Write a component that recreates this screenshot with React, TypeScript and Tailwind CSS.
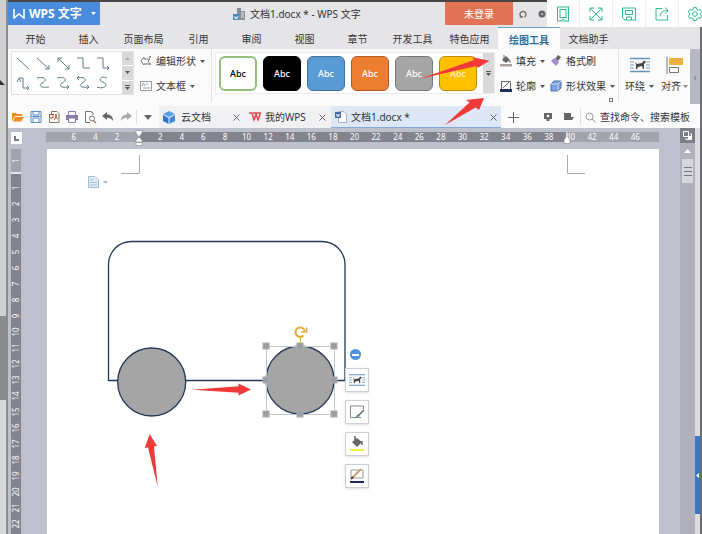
import { ReactNode, useState } from "react";

const menuTabs = [
  "开始", "插入", "页面布局", "引用", "审阅", "视图", "章节", "开发工具", "特色应用", "绘图工具", "文档助手",
];

const connectors = [
  "M4 5 L16 16",
  "M4 5 L16 16 M16 12 V16 H12",
  "M5 5 L16 16 M16 12 V16 H12 M5 9 V5 H9",
  "M4 5 H10 V15 H17",
  "M4 5 H10 V15 H16 M14 13 L16 15 L14 17",
  "M6 4 H10 V14 H16 M14 12 L16 14 L14 16 M4 8 L6 4 L8 8",
  "M4 4 C14 2 14 7 9 9 C5 12 8 14 16 13",
  "M4 4 C14 2 14 7 9 9 C5 12 8 14 16 13 M14 11 L16 13 L14 15",
  "M4 4 C14 2 14 7 9 9 C5 12 8 14 16 13 M14 11 L16 13 L14 15 M6 2 L4 4 L6 6",
  "M14 4 C7 1 5 7 10 8 C16 10 12 16 4 13",
];

const shapeStyles = [
  { name: "白色", className: "bg-white border-2 border-[#93c07c] text-black" },
  { name: "黑色", className: "bg-black border border-black text-white" },
  { name: "蓝色", className: "bg-[#5b9bd5] border border-[#41719c] text-white" },
  { name: "橙色", className: "bg-[#ed7d31] border border-[#ae5a21] text-white" },
  { name: "灰色", className: "bg-[#a5a5a5] border border-[#787878] text-white" },
  { name: "金色", className: "bg-[#ffc000] border border-[#bc8c00] text-[#fff0c0]" },
];

const horizontalMarks = [6, 4, 2, 0, ...Array.from({ length: 23 }, (_, i) => (i + 1) * 2)];
const verticalMarks = Array.from({ length: 22 }, (_, i) => i + 1);

const handles = [
  [266, 346], [300, 346], [334, 346],
  [266, 380], [334, 380],
  [266, 414], [300, 414], [334, 414],
];

function Caret({ className = "text-[#555]" }: { className?: string }) {
  return (
    <svg className={`w-[5px] h-[3px] shrink-0 ${className}`} viewBox="0 0 5 3" fill="currentColor" aria-hidden="true">
      <path d="M0 0 H5 L2.5 3 Z" />
    </svg>
  );
}

function CloseButton({ label }: { label: string }) {
  return (
    <button aria-label={label}>
      <svg className="w-[7px] h-[7px]" viewBox="0 0 7 7" stroke="#666">
        <path d="M.5 .5 L6.5 6.5 M6.5 .5 L.5 6.5" />
      </svg>
    </button>
  );
}

function RibbonButton({ icon, label, caret = true }: { icon: ReactNode, label: string, caret?: boolean }) {
  return (
    <button className="flex items-center h-5 whitespace-nowrap">
      <span className="w-4 shrink-0">{icon}</span>
      <span className="mr-1">{label}</span>
      {caret && <Caret />}
    </button>
  );
}

function WrapIcon({ className }: { className: string }) {
  return (
    <svg className={className} viewBox="0 0 20 16" fill="none" aria-hidden="true">
      <path d="M0 1.5 H20 M0 14.5 H20" stroke="#5f93bb" strokeWidth="1.4" />
      <path d="M0 5 H4 M0 8 H4 M0 11 H4 M16 5 H20 M16 8 H20 M16 11 H20" stroke="#6f9cc0" />
      <path d="M5 5 L7 7 L12 6 L14 3.5 L16 5 L14 7 L14 12 H13 L12 9 L8 10 L7 12 H6 L6 8 Z" fill="#444" />
    </svg>
  );
}

function QuickIcons() {
  const items = [
    { label: "打开", art: <path d="M1 3 H5 L6 4 H11 V6 H4 L1 11 Z M4 7 H13 L10 11.5 H2 Z" fill="#ee8b22" /> },
    { label: "保存", art: <path d="M2 1.5 H12 V12.5 H2 Z M4 1.5 V5 H10 V1.5 M4 12 V8 H10 V12 M2 6.5 H12" stroke="#5b8fcb" fill="none" /> },
    { label: "输出为PDF", art: <><path d="M4.5 4 V1.5 H10 L12 3.5 V12.5 H2.5 V9" stroke="#8a7763" fill="none" /><path d="M2 4.5 H7 M2.5 4.5 V8 H6 V5 M7 10 C9 8 9.5 6 9 4 C8 6 10 9 11 9" stroke="#b54a32" fill="none" /></> },
    { label: "打印", art: <><path d="M1 5 H13 V10 H1 Z" fill="#8d79ac" /><path d="M3.5 5 V1.5 H10.5 V5 M3.5 8 H10.5 V12.5 H3.5 Z" stroke="#8d79ac" fill="#fff" /></> },
    { label: "打印预览", art: <><path d="M10 5 V3 L8 1.5 H2.5 V12.5 H7" stroke="#777" fill="none" /><circle cx="9" cy="8.5" r="2.5" stroke="#777" fill="none" /><path d="M10.5 10.5 L13 13" stroke="#b07d4c" strokeWidth="1.5" /></> },
    { label: "撤销", art: <path d="M1 6 L6 2 V4.5 C10 4.5 12 7 12 11 C10.5 8.5 9 7.8 6 7.8 V10 Z" fill="#666" /> },
    { label: "恢复", art: <path d="M13 6 L8 2 V4.5 C4 4.5 2 7 2 11 C3.5 8.5 5 7.8 8 7.8 V10 Z" fill="#aaa" /> },
  ];
  return (
    <div className="flex items-center gap-1 px-[3px] border-r border-[#ddd] my-1">
      {items.map((item) => (
        <button key={item.label} aria-label={item.label}>
          <svg className="w-[14px] h-[14px]" viewBox="0 0 14 14">{item.art}</svg>
        </button>
      ))}
    </div>
  );
}

function TitleBar() {
  return (
    <header className="flex h-[27px] pb-[2px] border-t-2 border-[#4a4542] bg-[#e5e5e7]">
      <button className="flex items-center w-[92px] shrink-0 bg-[#4a8cdc] text-white text-[12px] font-bold pl-[5px] pr-1">
        <svg className="w-3 h-[10px] mr-1 shrink-0" viewBox="0 0 12 10" fill="none" stroke="#fff" strokeWidth="1.6" aria-hidden="true">
          <path d="M1 0 V9 L6 5 L11 9 V0" />
        </svg>
        <span className="flex-1 text-left whitespace-nowrap">WPS 文字</span>
        <Caret className="text-white" />
      </button>
      <h1 className="flex flex-1 items-center pl-[133px] whitespace-nowrap">
        <svg className="w-3 h-3 mr-[5px]" viewBox="0 0 12 12" aria-hidden="true">
          <path d="M4 0 H8 V3 H12 V12 H6 V6 H4 Z" fill="#8a9098" />
          <path d="M0 6 H6 V12 H0 Z" fill="#4a86c6" />
          <path d="M1.5 8 L2.5 11 L3 9 L4 11 L5 8 M8 5 H11 M8 7 H11 M8 9 H11" stroke="#fff" strokeWidth=".8" fill="none" />
        </svg>
        文档1.docx * - WPS 文字
      </h1>
      <button className="w-[68px] shrink-0 bg-[#e27354] text-white">未登录</button>
      <div className="flex items-center gap-[11px] pl-[6px] w-[187px] shrink-0">
        <button aria-label="皮肤">
          <svg className="w-2 h-2" viewBox="0 0 8 8" fill="none" stroke="#777" strokeWidth="1.5">
            <path d="M2.5 7 A3 3 0 1 1 5.5 7 M1.5 5 V7 H4" />
          </svg>
        </button>
        <button aria-label="设置">
          <svg className="w-2 h-2" viewBox="0 0 8 8" fill="#666">
            <circle cx="4" cy="4" r="3.5" />
            <circle cx="4" cy="4" r="1" fill="#ccc" />
          </svg>
        </button>
      </div>
    </header>
  );
}

function ViewerToolbar() {
  const items = [
    { label: "手机", art: <><rect x="2.5" y="1" width="11" height="14" /><rect x="5" y="3.5" width="6" height="8" /><path d="M7 13.3 H9" /></> },
    { label: "全屏", art: <path d="M2 6 V2 H6 M10 2 H14 V6 M14 10 V14 H10 M6 14 H2 V10 M2 2 L14 14 M14 2 L2 14" /> },
    { label: "保存", art: <path d="M1.5 2 H14.5 V14 H4 L1.5 11.5 Z M4.5 4.5 H11.5 V8.5 H4.5 Z M5.5 14 V11 H10.5 V14" /> },
    { label: "分享", art: <path d="M8 2.5 H2 V14 H13.5 V9 M6 10.5 C6 6.5 9 4.5 14 4.5 M11 1.5 L14.3 4.5 L11 7.5" /> },
    { label: "设置", art: <><circle cx="8" cy="8" r="2.3" /><path d="M6.7 1.5 H9.3 L9.8 3.4 L11.4 4.2 L13.2 3.5 L14.7 5.8 L13.4 7.2 V8.8 L14.7 10.2 L13.2 12.5 L11.4 11.8 L9.8 12.6 L9.3 14.5 H6.7 L6.2 12.6 L4.6 11.8 L2.8 12.5 L1.3 10.2 L2.6 8.8 V7.2 L1.3 5.8 L2.8 3.5 L4.6 4.2 L6.2 3.4 Z" /></> },
  ];
  return (
    <div className="absolute top-0 right-0 flex w-[155px] h-[27px] overflow-hidden bg-white">
      {items.map((item) => (
        <button key={item.label} aria-label={item.label} className="flex items-center justify-center w-[33px] shrink-0 border-r border-[#eee]">
          <svg className="w-4 h-4" viewBox="0 0 16 16" fill="none" stroke="#2dbe87">{item.art}</svg>
        </button>
      ))}
    </div>
  );
}

function Ribbon() {
  return (
    <section aria-label="绘图工具" className="flex h-[57px] bg-[#fbfbfc]">
      <div className="flex h-[44px] mt-[2px] ml-[3px] border border-[#e2e2e4] bg-white">
        <div className="grid grid-cols-5 pl-[1px]">
          {connectors.map((d, i) => (
            <button key={d} aria-label={`连接符 ${i + 1}`}>
              <svg className="w-5 h-5" viewBox="0 0 20 20" fill="none" stroke="#5d7d86">
                <path d={d} />
              </svg>
            </button>
          ))}
        </div>
        <div className="flex flex-col w-[11px] ml-[9px] bg-[#d9d9dc]">
          <button aria-label="上一行" className="flex flex-1 items-center justify-center border-b border-white"><Caret className="text-[#aaa] rotate-180" /></button>
          <button aria-label="下一行" className="flex flex-1 items-center justify-center border-b border-white"><Caret /></button>
          <button aria-label="更多形状" className="flex flex-col flex-1 items-center justify-center gap-[1px]"><span className="w-[5px] h-[1px] bg-[#555]" /><Caret /></button>
        </div>
      </div>

      <div className="flex flex-col gap-[5px] pt-[2px] pl-[6px] pr-[6px] border-r border-[#e2e2e4] mb-1">
        <RibbonButton label="编辑形状" icon={
          <svg className="w-3 h-3" viewBox="0 0 12 12" fill="none" stroke="#777">
            <path d="M1 6 L4 2 V4 H10 L8 6 L10 9 H4 V10 Z" />
            <path d="M9 1 h2 v2 h-2 z M9 8 h2 v2 h-2 z" fill="#999" stroke="none" />
          </svg>
        } />
        <RibbonButton label="文本框" icon={
          <svg className="w-3 h-3" viewBox="0 0 12 12" fill="none" stroke="#999">
            <path d="M.5 1.5 H11.5 V10.5 H.5 Z M2 6 L3.5 3 L5 6 M6 4 H8 M3 8 H10" />
          </svg>
        } />
      </div>

      <div className="flex h-[42px] mt-[3px] ml-[3px] pt-[3px] border border-[#ececee] bg-white">
        <div className="flex gap-[6px] px-[3px]">
          {shapeStyles.map((style) => (
            <button key={style.name} aria-label={style.name} className={`w-[38px] h-[35px] rounded-[6px] text-[9px] font-medium ${style.className}`}>
              Abc
            </button>
          ))}
        </div>
        <button aria-label="更多样式" className="flex flex-col items-center justify-center gap-[1px] w-[11px] -mt-[3px] ml-[3px] bg-[#d9d9dc]">
          <span className="w-[5px] h-[1px] bg-[#555]" />
          <Caret />
        </button>
      </div>

      <div className="grid grid-cols-[auto_auto] gap-x-[5px] gap-y-[5px] content-start pt-[2px] pl-[5px]">
        <RibbonButton label="填充" icon={
          <svg className="w-3 h-3" viewBox="0 0 12 12">
            <path d="M2 5 L6 1 L10 5 L6 8 Z" fill="#666" />
            <path d="M4 0 V4 M10 5 V8" stroke="#666" />
            <path d="M0 9 H12 V11.5 H0 Z" fill="#a9a19e" />
          </svg>
        } />
        <RibbonButton label="格式刷" caret={false} icon={
          <svg className="w-3 h-3" viewBox="0 0 12 12">
            <path d="M8 0 L11 2 L8 6 L5 4 Z" fill="#666" />
            <path d="M4 3 L9 7 L6 11 L1 6 Z" fill="#ab8bd0" />
          </svg>
        } />
        <RibbonButton label="轮廓" icon={
          <svg className="w-3 h-3" viewBox="0 0 12 12" fill="none">
            <path d="M1.5 9 V1.5 H10.5 V9 M3 8 L9 2" stroke="#666" />
            <path d="M0 9 H12 V12 H0 Z" fill="#1d2d5c" />
          </svg>
        } />
        <RibbonButton label="形状效果" icon={
          <svg className="w-3 h-3" viewBox="0 0 12 12">
            <path d="M1 4 L4 1 H11 V8 L8 11 H1 Z" fill="#7d9fe0" stroke="#55709f" />
            <path d="M1 4 H8 V11 M8 4 L11 1" fill="none" stroke="#c5d5f5" />
          </svg>
        } />
      </div>
      <button aria-label="形状设置" className="self-end mb-1 -ml-[6px] w-1 h-1 border border-[#777]" />

      <div className="flex flex-1 gap-[7px] ml-[5px] pl-[6px] mb-1 border-l border-[#e2e2e4]">
        <button className="flex flex-col items-center gap-[6px] pt-[8px] whitespace-nowrap">
          <WrapIcon className="w-5 h-4 shrink-0" />
          <span className="flex items-center gap-1">环绕<Caret /></span>
        </button>
        <button className="flex flex-col items-center gap-[5px] pt-[8px] whitespace-nowrap">
          <svg className="w-5 h-[17px] shrink-0" viewBox="0 0 20 17" aria-hidden="true">
            <path d="M2 0 V17" stroke="#777" />
            <path d="M4 1 H18 V8 H4 Z" fill="#f0b040" />
            <path d="M4.5 10.5 H13.5 V15.5 H4.5 Z" fill="#fff" stroke="#777" />
          </svg>
          <span className="flex items-center gap-[2px]">对齐<Caret className="text-[#888]" /></span>
        </button>
      </div>
      <button aria-label="展开功能区" className="w-[10px] shrink-0 mb-[2px] bg-[#b7b8c3] text-[#777]">›</button>
    </section>
  );
}

function DocumentTabs() {
  return (
    <div className="flex h-[22px] bg-[#fbfbfc] whitespace-nowrap">
      <QuickIcons />
      <button aria-label="自定义快速访问" className="flex items-center justify-center w-[22px]">
        <svg className="w-2 h-[5px]" viewBox="0 0 8 5" fill="#666"><path d="M0 0 H8 L4 5 Z" /></svg>
      </button>
      <div className="flex items-center w-[86px] pl-1 pr-[5px] bg-[#f1f1f3]">
        <svg className="w-3 h-[13px] mr-[6px]" viewBox="0 0 12 13" aria-hidden="true">
          <path d="M6 0 L12 3 L6 6 L0 3 Z" fill="#5aa0e8" />
          <path d="M0 4 L5.5 7 V13 L0 10 Z" fill="#2b78cf" />
          <path d="M12 4 L6.5 7 V13 L12 10 Z" fill="#3d8ade" />
        </svg>
        <a href="#cloud" className="flex-1">云文档</a>
        <CloseButton label="关闭云文档" />
      </div>
      <div className="flex items-center w-[86px] pl-1 pr-[5px] bg-[#f1f1f3]">
        <svg className="w-3 h-[10px] mr-1" viewBox="0 0 12 10" fill="none" stroke="#e0474f" strokeWidth="1.4" aria-hidden="true">
          <path d="M0 1 H3 L5 8 L7 2 L9 8 L11.5 1 H4" />
        </svg>
        <a href="#mywps" className="flex-1">我的WPS</a>
        <CloseButton label="关闭我的WPS" />
      </div>
      <div className="flex items-center w-[170px] pl-1 pr-1 pt-[1px] bg-[#dde7f5] border-b border-[#86a9d6]">
        <svg className="w-3 h-3 mr-1" viewBox="0 0 12 12" aria-hidden="true">
          <path d="M3.5 .5 H9 L11.5 3 V11.5 H3.5 Z" fill="#fff" stroke="#a7b0be" />
          <path d="M0 1 H6 V7 H0 Z" fill="#4569a8" />
          <path d="M1.5 3 L2.3 5.5 L3 3.5 L3.7 5.5 L4.5 3" fill="none" stroke="#fff" strokeWidth=".8" />
        </svg>
        <a href="#doc" className="flex-1" aria-current="page">文档1.docx *</a>
        <CloseButton label="关闭文档1" />
      </div>
      <button aria-label="新建" className="flex items-center justify-center w-6">
        <svg className="w-[11px] h-[11px]" viewBox="0 0 11 11" stroke="#666"><path d="M5.5 0 V11 M0 5.5 H11" /></svg>
      </button>
      <div className="flex items-center gap-3 pl-[19px] pr-[6px] my-[3px] border-r border-[#ddd]">
        <button aria-label="演示">
          <svg className="w-2 h-2" viewBox="0 0 8 8" fill="#666"><path d="M0 0 H8 V6 H5.5 V8 H2.5 V6 H0 Z" /><circle cx="4" cy="3" r="1.3" fill="#fff" /></svg>
        </button>
        <button aria-label="窗口列表">
          <svg className="w-[10px] h-2" viewBox="0 0 10 8" fill="#666"><path d="M0 0 H7 V4 H10 L8 7 L6 7 H0 Z" /></svg>
        </button>
      </div>
      <label className="flex flex-1 items-center min-w-0 pl-1">
        <svg className="w-[11px] h-[11px] mr-1 shrink-0" viewBox="0 0 11 11" fill="none" stroke="#999">
          <circle cx="4.5" cy="4.5" r="3.5" />
          <path d="M7 7 L10.5 10.5" />
        </svg>
        <input aria-label="搜索" placeholder="查找命令、搜索模板" className="flex-1 min-w-0 outline-none placeholder:text-[#333]" />
      </label>
    </div>
  );
}

function HorizontalRuler() {
  return (
    <div className="grid flex-1 h-[10px] text-[8px] leading-[10px] text-white">
      <div className="flex col-start-1 row-start-1 bg-[#a2a3ad]">
        <div className="w-[428px] ml-[93px] bg-[#82838e]" />
      </div>
      <div className="flex col-start-1 row-start-1 w-[583px] ml-[17px]">
        {horizontalMarks.map((mark, i) => (
          <span key={i} className="relative flex-1 text-center">
            {mark !== 0 && mark}
            {mark === 0 && (
              <svg className="absolute -top-[2px] left-[7px] w-2 h-4" viewBox="0 0 8 16" fill="#fff" stroke="#888" strokeWidth=".6">
                <path d="M1 .5 H7 V3 L4 7 L1 3 Z M4 7 L7 10 V12 H1 V10 Z M1 12.5 H7 V15.5 H1 Z" />
              </svg>
            )}
            {mark === 40 && (
              <svg className="absolute top-0 left-[3px] w-2 h-3" viewBox="0 0 8 12" fill="#fff" stroke="#888" strokeWidth=".6">
                <path d="M3 0 H5 V5 L7 8 V11.5 H1 V8 L3 5 Z" />
              </svg>
            )}
          </span>
        ))}
      </div>
    </div>
  );
}

function VerticalRuler() {
  return (
    <div className="flex flex-col w-[10px] ml-[3px] text-[8px] leading-[10px] text-white">
      <div className="flex items-center justify-center h-[23px] bg-[#a2a3ad]">
        <span className="-rotate-90">1</span>
      </div>
      <div className="flex flex-col flex-1 border-t-2 border-[#e4e4ea] pt-[6px] bg-[#82838e]">
        {verticalMarks.map((mark) => (
          <span key={mark} className="flex items-center justify-center h-4">
            <span className="-rotate-90">{mark}</span>
          </span>
        ))}
      </div>
    </div>
  );
}

function DrawingPage() {
  const sideButtons = [
    { label: "环绕方式", art: <WrapIcon className="w-4 h-4" /> },
    { label: "形状样式", art: <svg className="w-4 h-4" viewBox="0 0 16 16" fill="none"><path d="M12 13.5 H1.5 V2 H14.5 V5" stroke="#888" /><path d="M15 6 L10 11" stroke="#666" strokeWidth="1.5" /><path d="M6 14 L9 10 L11 12 Z" fill="#4f8496" /></svg> },
    { label: "形状填充", art: <svg className="w-4 h-4" viewBox="0 0 16 16"><path d="M3 6 L8 2 L13 6 L8 11 Z" fill="#666" /><path d="M6 0 V4 M13 5 V9" stroke="#666" strokeWidth="1.5" /><path d="M1 13 H15 V15 H1 Z" fill="#f2f24a" /></svg> },
    { label: "形状轮廓", art: <svg className="w-4 h-4" viewBox="0 0 16 16" fill="none"><path d="M2 10 V2 H14 V10 H2" stroke="#999" /><path d="M3 10 L12 1" stroke="#c9a06a" strokeWidth="2" /><path d="M2 11 L4 9" stroke="#444" strokeWidth="2" /><path d="M1 13 H15 V15 H1 Z" fill="#1c2860" /></svg> },
  ];

  return (
    <main className="relative flex-1 ml-[26px] bg-white overflow-hidden">
      <svg className="block w-[612px] h-[385px]" viewBox="47 149 612 385" fill="none" role="img" aria-label="汽车图形">
        <path d="M121 173.5 H139.5 V155 M567.5 155 V173.5 H585" stroke="#aaa" />
        <path d="M88.5 176.5 H95 L98.5 180 V187.5 H88.5 Z" fill="#e6f0f8" stroke="#9fbcd2" />
        <path d="M90 180 H94 M90 182.5 H97 M90 185 H97" stroke="#9fbcd2" />
        <path d="M103 181 H108 L105.5 183.5 Z" fill="#aaa" />

        <path d="M108.5 380.5 V264 A23 23 0 0 1 131.5 241.5 H322 A23 23 0 0 1 345 264 V380.5 Z" stroke="#24395a" strokeWidth="1.3" />
        <circle cx="151.7" cy="382" r="34" fill="#a5a5a5" stroke="#24395a" strokeWidth="1.3" />
        <circle cx="300" cy="380" r="34" fill="#a5a5a5" stroke="#24395a" strokeWidth="1.3" />

        <path d="M266.5 346.5 H334.5 V414.5 H266.5 Z" stroke="#c4c6cc" />
        <path d="M300.5 338 V343" stroke="#e0a93a" />
        {handles.map(([x, y]) => (
          <rect key={`${x}-${y}`} x={x - 3} y={y - 3} width="6" height="6" fill="#9b9ca3" stroke="#a9aab2" />
        ))}
        <path d="M303.5 335.5 A4.7 4.7 0 1 1 304.7 331" stroke="#e3ac40" strokeWidth="2" />
        <path d="M301 332 H306.5 V327.5" stroke="#e3ac40" strokeWidth="1.6" />

        <path d="M192 389.7 L238.5 386.3 V383.5 L251 389.5 L238.5 395.5 V392.7 Z" fill="#f03a3a" />
        <path d="M157.7 486.7 L148 447.5 L144.7 448 L149.7 434 L157 446 L154 446.5 Z" fill="#f03a3a" />
      </svg>

      <div className="absolute left-[298px] top-[200px] flex flex-col items-center">
        <button aria-label="收起" className="flex items-center justify-center w-[11px] h-[11px] mr-1 mb-2 rounded-full bg-[#4f94d8]">
          <span className="w-[7px] h-[2px] bg-white" />
        </button>
        <div className="flex flex-col gap-2">
          {sideButtons.map((button) => (
            <button key={button.label} aria-label={button.label} className="flex items-center justify-center w-6 h-6 bg-white border border-[#cfd0d5] shadow-sm">
              {button.art}
            </button>
          ))}
        </div>
      </div>
    </main>
  );
}

function ScrollColumn() {
  return (
    <div className="flex flex-col items-center w-[15px] bg-[#b0b1bc]">
      <button aria-label="标尺" className="flex items-center justify-center w-full h-[15px] bg-[#7d7e88]">
        <svg className="w-[9px] h-[9px]" viewBox="0 0 9 9" fill="none" stroke="#fff">
          <path d="M.5 .5 H5.5 V5.5 H.5 Z M3 7 V8.5 H8.5 V3 H7" />
          <path d="M5 5 H8 V8 H5 Z" fill="#fff" stroke="none" />
        </svg>
      </button>
      <button aria-label="向上滚动" className="pt-[6px]">
        <svg className="w-[7px] h-1" viewBox="0 0 7 4" fill="#fff"><path d="M0 4 L3.5 0 L7 4 Z" /></svg>
      </button>
      <div className="flex flex-col items-center justify-center gap-[3px] w-[11px] h-6 mt-[6px] bg-[#d6d7dd]">
        <span className="w-2 h-[1px] bg-[#777]" />
        <span className="w-2 h-[1px] bg-[#777]" />
        <span className="w-2 h-[1px] bg-[#777]" />
      </div>
    </div>
  );
}

export default function App() {
  const [activeTab, setActiveTab] = useState("绘图工具");

  const tabWidth = (tab: string) => {
    if (tab === activeTab) return "w-[62px]";
    return tab.length > 2 ? "w-[57px]" : "w-[53px]";
  };

  return (
    <div className="relative flex min-h-screen overflow-hidden bg-[#d4d4d4] font-['Noto_Sans','Noto_Sans_CJK_SC',sans-serif] text-[10px] leading-[14px] text-[#333]">
      <div className="flex flex-col w-2 shrink-0 border-r-2 border-[#8c8c8c]">
        <div className="h-[316px] bg-[#d0d0d0] pt-[80px]">
          <svg className="w-[5px] h-[5px]" viewBox="0 0 5 5" aria-hidden="true"><path d="M0 0 L5 5 H0 Z" fill="#333" /></svg>
        </div>
        <div className="h-[84px] bg-[#8b8b8b]" />
        <div className="flex-1 bg-[#d8d8d6]" />
      </div>

      <div className="flex flex-col flex-1 min-w-0 border-r-2 border-[#6d6e72]">
        <TitleBar />
        <nav aria-label="功能区" className="flex h-[22px] pl-[1px] bg-[#e5e5e7]">
          {menuTabs.map((tab) => (
            <button
              key={tab}
              onClick={() => setActiveTab(tab)}
              className={`pt-[2px] ${tabWidth(tab)} ${tab === activeTab ? "bg-[#fbfbfc] border-t border-[#6fa0c8] text-[#2f6f9f] font-bold" : ""}`}
            >
              {tab}
            </button>
          ))}
        </nav>
        <Ribbon />
        <DocumentTabs />

        <div className="flex flex-1 bg-[#bfc0cd]">
          <div className="flex flex-col flex-1">
            <div className="flex h-[21px] pt-1">
              <button aria-label="制表符" className="flex items-center justify-center w-[11px] h-3 ml-[3px] mr-6 bg-white">
                <span className="w-[5px] h-[5px] border-l-2 border-b-2 border-[#777]" />
              </button>
              <HorizontalRuler />
              <div className="w-[21px]" />
            </div>
            <div className="flex flex-1">
              <VerticalRuler />
              <DrawingPage />
              <div className="w-[21px]" />
            </div>
          </div>
          <ScrollColumn />
          <div className="flex flex-col w-[5px] bg-[#dcdcde]">
            <button aria-label="展开任务窗格" className="flex items-center justify-center w-full h-[78px] mt-[308px] bg-[#3f76c4]">
              <svg className="w-[3px] h-[5px]" viewBox="0 0 3 5" fill="#fff"><path d="M3 0 V5 L0 2.5 Z" /></svg>
            </button>
          </div>
        </div>
      </div>

      <svg className="absolute left-[420px] top-[50px] w-[72px] h-[80px] pointer-events-none" viewBox="420 50 72 80" fill="#f03a3a" aria-hidden="true">
        <path d="M420 78.7 L474 60 L472.7 57.3 L489.5 60.7 L478 67.7 L476.5 66 Z" />
        <path d="M445 125 L469.5 102.5 L466 100 L484 98 L479 110 L475.5 107.5 Z" />
      </svg>
      <ViewerToolbar />
    </div>
  );
}
